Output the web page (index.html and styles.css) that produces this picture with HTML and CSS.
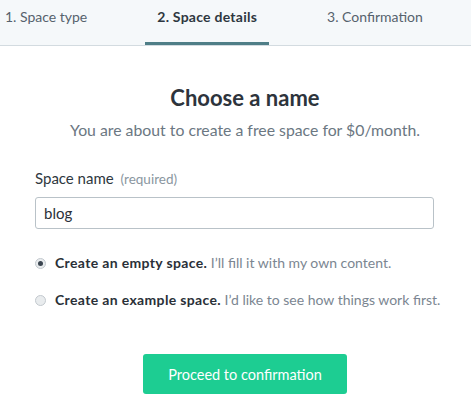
FILE: index.html
```html
<!DOCTYPE html>
<html lang="en">
<head>
<meta charset="utf-8">
<title>Create space</title>
<link rel="stylesheet" href="styles.css">
</head>
<body>
<nav class="tabs">
  <div class="tab">1. Space type</div>
  <div class="tab tab-active">2. Space details</div>
  <div class="tab">3. Confirmation</div>
</nav>
<main class="content">
  <h1 class="title">Choose a name</h1>
  <p class="subtitle">You are about to create a free space for $0/month.</p>
  <label class="field-label">Space name <span class="hint">(required)</span></label>
  <div class="input">blog</div>
  <div class="options">
    <div class="option">
      <span class="radio radio-checked"></span>
      <span class="option-text"><b>Create an empty space.</b> I’ll fill it with my own content.</span>
    </div>
    <div class="option">
      <span class="radio"></span>
      <span class="option-text"><b>Create an example space.</b> I’d like to see how things work first.</span>
    </div>
  </div>
  <div class="actions">
    <button class="btn">Proceed to confirmation</button>
  </div>
</main>
</body>
</html>
```
FILE: styles.css
```css
* { box-sizing: border-box; }
body {
  margin: 0;
  background: #ffffff;
  font-family: Lato, "Noto Sans", sans-serif;
  color: #2b333c;
}
.tabs {
  display: flex;
  gap: 70px;
  height: 46px;
  padding-left: 5px;
  background: #f5f8fa;
  border-bottom: 1px solid #d3dbe0;
}
.tab {
  position: relative;
  padding-top: 7px;
  font-size: 14px;
  line-height: 20px;
  color: #56626d;
  white-space: nowrap;
}
.tab-active {
  font-weight: bold;
  letter-spacing: 0.25px;
  color: #2e3740;
}
.tab-active::after {
  content: "";
  position: absolute;
  left: -12px;
  right: -12px;
  top: 42px;
  height: 3px;
  background: #4f7e87;
}
.content {
  width: 420px;
  margin-left: 35px;
  padding-top: 40px;
}
.title {
  margin: 0;
  text-align: center;
  font-size: 22px;
  line-height: 24px;
  font-weight: bold;
  color: #2d343c;
}
.subtitle {
  margin: 10px 0 0;
  text-align: center;
  font-size: 15.8px;
  line-height: 20px;
  color: #6b7782;
}
.field-label {
  display: block;
  margin-top: 28px;
  font-size: 15px;
  line-height: 20px;
  color: #2e3740;
}
.hint {
  margin-left: 3px;
  font-size: 13.5px;
  color: #8a96a0;
}
.input {
  margin-top: 8px;
  width: 399px;
  height: 32px;
  padding: 0 8px;
  border: 1px solid #b9c2c8;
  border-radius: 3px;
  font-size: 15px;
  line-height: 30px;
  color: #2a3038;
}
.options {
  margin-top: 24px;
  display: flex;
  flex-direction: column;
  gap: 17px;
}
.option {
  display: flex;
  align-items: center;
  font-size: 14px;
  line-height: 20px;
  color: #7b8691;
}
.option b {
  color: #2a3038;
  letter-spacing: 0.35px;
}
.radio {
  position: relative;
  flex: none;
  width: 11px;
  height: 11px;
  margin-right: 9px;
  border-radius: 50%;
  border: 1px solid #c3c9ce;
  background: #e9ecee;
}
.radio-checked::after {
  content: "";
  position: absolute;
  left: 2px;
  top: 2px;
  width: 5px;
  height: 5px;
  border-radius: 50%;
  background: #3b4550;
}
.actions {
  margin-top: 44px;
  display: flex;
  justify-content: center;
}
.btn {
  width: 204px;
  height: 40px;
  border: none;
  border-radius: 3px;
  background: #1dcd92;
  color: #ffffff;
  font-family: Lato, "Noto Sans", sans-serif;
  font-size: 14.5px;
}
```
